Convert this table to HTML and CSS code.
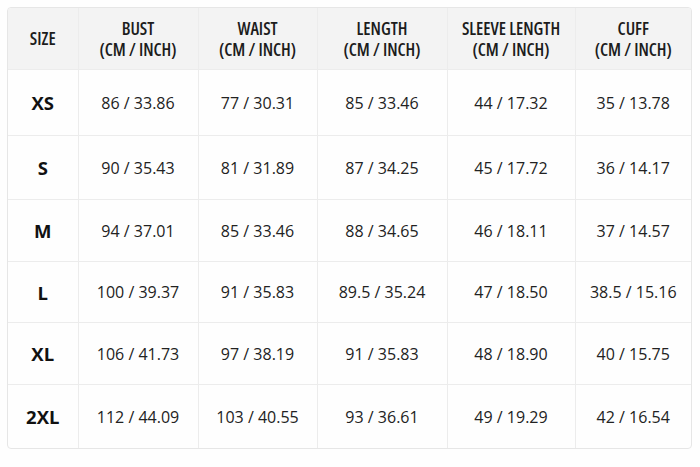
FILE: index.html
```html
<!DOCTYPE html>
<html>
<head>
<meta charset="utf-8">
<link rel="stylesheet" href="styles.css">
</head>
<body>
<div class="chart">
<table class="size-table">
<colgroup>
<col class="c-size"><col class="c-bust"><col class="c-waist"><col class="c-length"><col class="c-sleeve"><col class="c-cuff">
</colgroup>
<thead>
<tr>
<th>SIZE</th>
<th>BUST<br>(CM / INCH)</th>
<th>WAIST<br>(CM / INCH)</th>
<th>LENGTH<br>(CM / INCH)</th>
<th>SLEEVE LENGTH<br>(CM / INCH)</th>
<th>CUFF<br>(CM / INCH)</th>
</tr>
</thead>
<tbody>
<tr class="r1"><td class="size">XS</td><td>86 / 33.86</td><td>77 / 30.31</td><td>85 / 33.46</td><td>44 / 17.32</td><td>35 / 13.78</td></tr>
<tr class="r2"><td class="size">S</td><td>90 / 35.43</td><td>81 / 31.89</td><td>87 / 34.25</td><td>45 / 17.72</td><td>36 / 14.17</td></tr>
<tr class="r3"><td class="size">M</td><td>94 / 37.01</td><td>85 / 33.46</td><td>88 / 34.65</td><td>46 / 18.11</td><td>37 / 14.57</td></tr>
<tr class="r4"><td class="size">L</td><td>100 / 39.37</td><td>91 / 35.83</td><td>89.5 / 35.24</td><td>47 / 18.50</td><td>38.5 / 15.16</td></tr>
<tr class="r5"><td class="size">XL</td><td>106 / 41.73</td><td>97 / 38.19</td><td>91 / 35.83</td><td>48 / 18.90</td><td>40 / 15.75</td></tr>
<tr class="r6"><td class="size">2XL</td><td>112 / 44.09</td><td>103 / 40.55</td><td>93 / 36.61</td><td>49 / 19.29</td><td>42 / 16.54</td></tr>
</tbody>
</table>
</div>
</body>
</html>
```
FILE: styles.css
```css
html, body {
  margin: 0;
  padding: 0;
  background: #fefefe;
}
body {
  padding: 7px 10px 0 7px;
  font-family: "Open Sans", "DejaVu Sans Condensed", sans-serif;
  color: #1a1a1a;
}
.chart {
  width: 683px;
  border: 1px solid #e6e6e6;
  border-radius: 4px;
  overflow: hidden;
}
.size-table {
  width: 100%;
  border-collapse: collapse;
  table-layout: fixed;
}
.c-size { width: 70px; }
.c-bust { width: 120px; }
.c-waist { width: 119px; }
.c-length { width: 130px; }
.c-sleeve { width: 128px; }
.c-cuff { width: 116px; }
th, td {
  border: 1px solid #ececec;
  text-align: center;
  vertical-align: middle;
  padding: 0;
}
tr:first-child th { border-top: none; }
tr th:first-child, tr td:first-child { border-left: none; }
tr th:last-child, tr td:last-child { border-right: none; }
tbody tr:last-child td { border-bottom: none; }
th {
  background: #f3f3f3;
  height: 61px;
  font-size: 17.5px;
  font-weight: 600;
  font-stretch: 87.5%;
  line-height: 21px;
  color: #1c1c1c;
}
td {
  font-size: 16px;
  font-stretch: 90%;
  color: #222;
}
.r1 td { height: 65px; }
.r2 td { height: 63px; }
.r3 td { height: 61px; }
.r4 td { height: 60px; }
.r5 td { height: 61px; }
.r6 td { height: 63px; }
td.size {
  font-size: 18.5px;
  font-weight: 700;
  font-stretch: 100%;
  color: #111;
}
```
